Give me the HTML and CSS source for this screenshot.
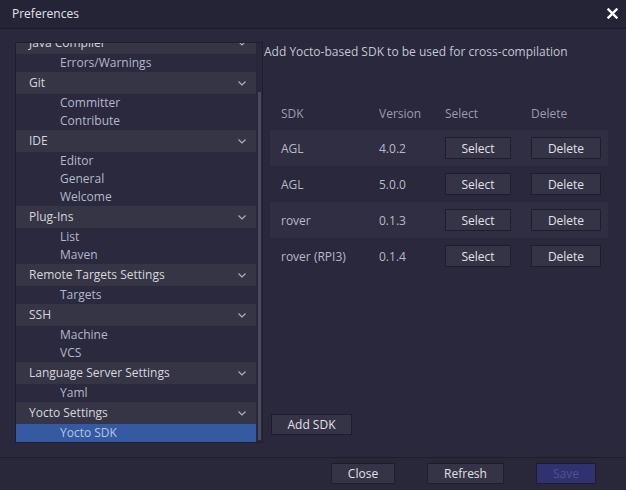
FILE: index.html
```html
<!DOCTYPE html>
<html>
<head>
<meta charset="utf-8">
<link rel="stylesheet" href="styles.css">
</head>
<body>
<div class="dialog">
  <div class="titlebar">
    <span class="title">Preferences</span>
    <svg class="close" width="11" height="11" viewBox="0 0 11 11"><path d="M1.5 1.5 L9.5 9.5 M9.5 1.5 L1.5 9.5" stroke="#ffffff" stroke-width="2.4" stroke-linecap="square"/></svg>
  </div>
  <div class="main">
    <div class="tree">
      <div class="list">
        <div class="group"><span>Java Compiler</span><svg class="chev" width="8" height="5" viewBox="0 0 8 5"><path d="M0.5 0.5 L4 4 L7.5 0.5" fill="none" stroke="#aeb0bc" stroke-width="1.2"/></svg></div>
        <div class="item">Errors/Warnings</div>
        <div class="group"><span>Git</span><svg class="chev" width="8" height="5" viewBox="0 0 8 5"><path d="M0.5 0.5 L4 4 L7.5 0.5" fill="none" stroke="#aeb0bc" stroke-width="1.2"/></svg></div>
        <div class="item">Committer</div>
        <div class="item">Contribute</div>
        <div class="group"><span>IDE</span><svg class="chev" width="8" height="5" viewBox="0 0 8 5"><path d="M0.5 0.5 L4 4 L7.5 0.5" fill="none" stroke="#aeb0bc" stroke-width="1.2"/></svg></div>
        <div class="item">Editor</div>
        <div class="item">General</div>
        <div class="item">Welcome</div>
        <div class="group"><span>Plug-Ins</span><svg class="chev" width="8" height="5" viewBox="0 0 8 5"><path d="M0.5 0.5 L4 4 L7.5 0.5" fill="none" stroke="#aeb0bc" stroke-width="1.2"/></svg></div>
        <div class="item">List</div>
        <div class="item">Maven</div>
        <div class="group"><span>Remote Targets Settings</span><svg class="chev" width="8" height="5" viewBox="0 0 8 5"><path d="M0.5 0.5 L4 4 L7.5 0.5" fill="none" stroke="#aeb0bc" stroke-width="1.2"/></svg></div>
        <div class="item">Targets</div>
        <div class="group"><span>SSH</span><svg class="chev" width="8" height="5" viewBox="0 0 8 5"><path d="M0.5 0.5 L4 4 L7.5 0.5" fill="none" stroke="#aeb0bc" stroke-width="1.2"/></svg></div>
        <div class="item">Machine</div>
        <div class="item">VCS</div>
        <div class="group"><span>Language Server Settings</span><svg class="chev" width="8" height="5" viewBox="0 0 8 5"><path d="M0.5 0.5 L4 4 L7.5 0.5" fill="none" stroke="#aeb0bc" stroke-width="1.2"/></svg></div>
        <div class="item">Yaml</div>
        <div class="group"><span>Yocto Settings</span><svg class="chev" width="8" height="5" viewBox="0 0 8 5"><path d="M0.5 0.5 L4 4 L7.5 0.5" fill="none" stroke="#aeb0bc" stroke-width="1.2"/></svg></div>
        <div class="item selected">Yocto SDK</div>
      </div>
      <div class="scrollbar"><div class="thumb"></div></div>
    </div>
    <div class="panel">
      <div class="desc">Add Yocto-based SDK to be used for cross-compilation</div>
      <div class="table">
        <div class="row head">
          <div class="cell">SDK</div><div class="cell">Version</div><div class="cell">Select</div><div class="cell last">Delete</div>
        </div>
        <div class="row odd">
          <div class="cell">AGL</div><div class="cell">4.0.2</div><div class="cell"><button class="btn sel">Select</button></div><div class="cell last"><button class="btn del">Delete</button></div>
        </div>
        <div class="row">
          <div class="cell">AGL</div><div class="cell">5.0.0</div><div class="cell"><button class="btn sel">Select</button></div><div class="cell last"><button class="btn del">Delete</button></div>
        </div>
        <div class="row odd">
          <div class="cell">rover</div><div class="cell">0.1.3</div><div class="cell"><button class="btn sel">Select</button></div><div class="cell last"><button class="btn del">Delete</button></div>
        </div>
        <div class="row">
          <div class="cell">rover (RPI3)</div><div class="cell">0.1.4</div><div class="cell"><button class="btn sel">Select</button></div><div class="cell last"><button class="btn del">Delete</button></div>
        </div>
      </div>
      <button class="btn add">Add SDK</button>
    </div>
  </div>
  <div class="footer">
    <button class="btn fclose">Close</button>
    <button class="btn frefresh">Refresh</button>
    <button class="btn fsave">Save</button>
  </div>
</div>
</body>
</html>
```
FILE: styles.css
```css
* { box-sizing: border-box; }
html, body { margin: 0; padding: 0; }
body {
  background: #29283c;
  font-family: "Open Sans", "Liberation Sans", sans-serif;
  font-size: 12px;
  color: #c4c6d2;
}
.dialog {
  width: 626px;
  height: 490px;
  display: flex;
  flex-direction: column;
  overflow: hidden;
}
.titlebar {
  height: 29px;
  flex: none;
  background: #252437;
  border-bottom: 1px solid #1c1b2a;
  display: flex;
  align-items: center;
  justify-content: space-between;
  padding: 0 8px 1px 12px;
}
.title { color: #e2e2ea; font-size: 12px; }
.close { display: block; margin-top: 0; }
.main {
  height: 428px;
  flex: none;
  display: flex;
  padding: 13px 18px 0 15px;
}
.tree {
  width: 248px;
  height: 401px;
  flex: none;
  border: 1px solid #1f1e2e;
  display: flex;
  overflow: hidden;
  background: #2a293d;
}
.list {
  flex: 1;
  margin-top: -11px;
}
.group {
  height: 22px;
  background: #363545;
  display: flex;
  align-items: center;
  justify-content: space-between;
  padding: 0 10px 1px 13px;
  color: #d6d6de;
}
.chev { display: block; margin-top: 1px; }
.item {
  height: 18px;
  line-height: 18px;
  padding-left: 44px;
  color: #b4b8cc;
}
.item.selected {
  background: #355aa2;
  color: #b8c4e4;
}
.scrollbar {
  width: 6px;
  flex: none;
  padding: 49px 1px 2px 2px;
  background: #29283b;
}
.thumb {
  width: 3px;
  height: 100%;
  background: #4a4a5c;
}
.panel {
  flex: 1;
  display: flex;
  flex-direction: column;
  align-items: flex-start;
  padding-left: 1px;
  height: 401px;
}
.desc {
  line-height: 18px;
  padding-top: 1px;
  color: #c4c6d4;
}
.table {
  margin-top: 35px;
  margin-left: 6px;
  width: 338px;
}
.row {
  display: grid;
  grid-template-columns: 98px 66px 87px 1fr;
  height: 36px;
  align-items: center;
}
.row.head {
  height: 34px;
  padding-top: 1px;
  color: #9c9cac;
}
.row.odd { background: #2f2e42; }
.cell { padding-left: 11px; color: inherit; }
.cell.last { padding-left: 10px; }
.row:not(.head) .cell { color: #b8bac8; }
.btn {
  font-family: "Open Sans", "Liberation Sans", sans-serif;
  font-size: 12px;
  color: #e0e0e8;
  background: #353446;
  border: 1px solid #1e1d2c;
  height: 22px;
  padding: 0;
  margin: 0;
  display: block;
}
.btn.sel { width: 66px; }
.btn.del { width: 70px; }
.btn.add {
  margin-top: auto;
  margin-left: 7px;
  margin-bottom: 8px;
  width: 81px;
  height: 21px;
}
.footer {
  flex: 1;
  border-top: 1px solid #1e1d2c;
  display: flex;
  justify-content: flex-end;
  align-items: flex-start;
  padding: 5px 30px 0 0;
  gap: 32px;
  background: #29283b;
}
.footer .btn { height: 21px; }
.fclose { width: 64px; }
.frefresh { width: 77px; }
.fsave {
  width: 60px;
  background: #2f3170;
  color: #4f5288;
}
```
